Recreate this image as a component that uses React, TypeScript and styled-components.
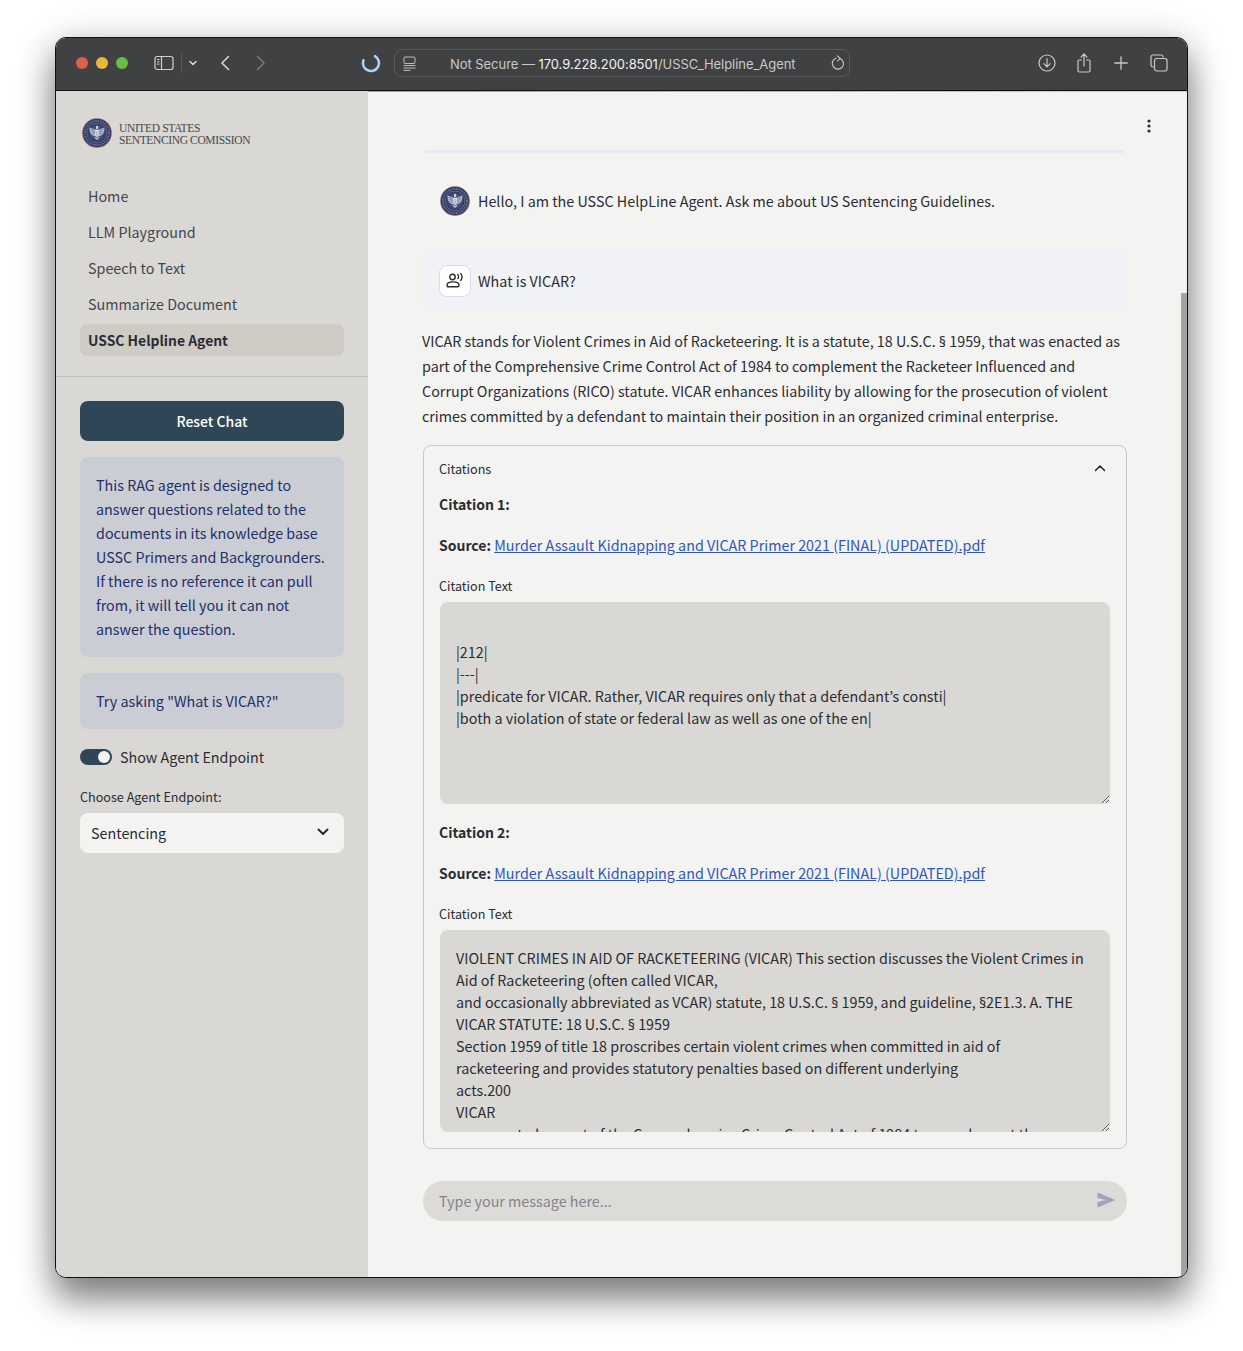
import { useId } from 'react';
import styled, { createGlobalStyle } from 'styled-components';

const SANS = '"Noto Sans CJK JP", "Noto Sans", sans-serif';
const INK = '#2b2c33';

const GlobalStyle = createGlobalStyle`
  html, body {
    margin: 0;
    padding: 0;
    height: 100%;
    background: #ffffff;
    overflow: hidden;
  }
  * {
    box-sizing: border-box;
  }
`;

const SOURCE_FILE = 'Murder Assault Kidnapping and VICAR Primer 2021 (FINAL) (UPDATED).pdf';

const Seal = ({ size }: { size: number }) => {
  const id = useId();
  return (
    <svg width={size} height={size} viewBox="0 0 30 30" style={{ flexShrink: 0 }}>
      <defs>
        <radialGradient id={id} cx="50%" cy="50%" r="50%">
          <stop offset="0%" stopColor="#66708f" />
          <stop offset="100%" stopColor="#2d3964" />
        </radialGradient>
      </defs>
      <circle cx="15" cy="15" r="14.8" fill="#8a5a66" />
      <circle cx="15" cy="15" r="13.9" fill="#2b3863" />
      <circle cx="15" cy="15" r="12.1" fill="none" stroke="#a4acc4" strokeWidth="1.7" strokeDasharray="0.8 0.9" opacity="0.7" />
      <circle cx="15" cy="15" r="10" fill={`url(#${id})`} stroke="#8f98b3" strokeWidth="0.5" />
      <path d="M15 7.8c.9 0 1.5.7 1.4 1.5l-.6.6.1 1.4h-1.8l.1-1.5c-.6-.8 0-2 .8-2z" fill="#d6dae4" />
      <path d="M13.6 11.8 7.6 9.6c-.3 3.6.6 7 4.2 8.4l1.8.2zM16.4 11.8l6-2.2c.3 3.6-.6 7-4.2 8.4l-1.8.2z" fill="#aeb5ca" />
      <path d="M9.2 11.2 13 13M9.4 13.2 13 14.6M10.4 15.4 13 16.2M20.8 11.2 17 13M20.6 13.2 17 14.6M19.6 15.4 17 16.2" stroke="#4f5b80" strokeWidth="0.5" />
      <path d="M12.9 12h4.2v4.6c0 1.2-1 2-2.1 2.6-1.1-.6-2.1-1.4-2.1-2.6z" fill="#e4e7ee" />
      <path d="M14 13v4.8M15 13v5.4M16 13v4.8" stroke="#6b7696" strokeWidth="0.4" />
      <path d="M12.3 19.6l2.7 2.4 2.7-2.4-1.3-.6-1.4 1.1-1.4-1.1z" fill="#b9c0d2" />
    </svg>
  );
};

const Page = styled.div`
  padding: 37px 55px 0;
`;

const Window = styled.div`
  width: 1133px;
  height: 1241px;
  border: 1px solid #111112;
  border-radius: 11px;
  overflow: hidden;
  display: flex;
  flex-direction: column;
  background: #f3f3f1;
  box-shadow: 0 22px 34px rgba(0, 0, 0, 0.42), 0 6px 40px rgba(0, 0, 0, 0.22);
`;

const TitleBar = styled.header`
  height: 53px;
  flex-shrink: 0;
  background: #404143;
  border-bottom: 1px solid #111112;
  display: flex;
  align-items: center;
  padding: 0 19px 2px 20px;
  position: relative;
`;

const Progress = styled.div`
  position: absolute;
  left: 0;
  right: 0;
  bottom: -2px;
  height: 1px;
  background: linear-gradient(90deg, #d9734e, #dfa25b 50%, #e6d772);
`;

const Light = styled.span<{ $color: string; $after?: number }>`
  width: 12px;
  height: 12px;
  border-radius: 50%;
  background: ${({ $color }) => $color};
  margin-right: ${({ $after }) => $after ?? 8}px;
`;

const BarIcon = styled.svg<{ $after?: number }>`
  flex-shrink: 0;
  display: block;
  margin-right: ${({ $after }) => $after ?? 0}px;
`;

const Divider = styled.span`
  width: 1px;
  height: 20px;
  background: #57585a;
  margin: 0 7px 0 7px;
`;

const AddressBar = styled.div`
  width: 456px;
  height: 28px;
  margin-left: 13px;
  border: 1px solid #58595b;
  border-radius: 8px;
  display: flex;
  align-items: center;
  padding: 0 4px 0 8px;
`;

const Address = styled.div`
  flex: 1;
  padding: 2px 0 0 34px;
  font: 400 13px/16px Inter, "Liberation Sans", sans-serif;
  letter-spacing: -0.05px;
  color: #c9c9ca;
  white-space: nowrap;
`;

const Host = styled.span`
  color: #f1f1f1;
`;

const BarSpacer = styled.div`
  flex: 1;
`;

const Body = styled.div`
  flex: 1;
  display: flex;
  min-height: 0;
  position: relative;
`;

const Sidebar = styled.aside`
  width: 312px;
  flex-shrink: 0;
  background: #d9d8d4;
  display: flex;
  flex-direction: column;
  font-family: ${SANS};
  color: ${INK};
`;

const Logo = styled.div`
  display: flex;
  align-items: center;
  gap: 7px;
  padding: 27px 0 0 26px;
`;

const LogoText = styled.div`
  font: 400 11.5px/12.5px "Liberation Serif", serif;
  letter-spacing: -0.36px;
  padding-top: 2px;
  color: #4a4a4a;
`;

const Nav = styled.nav`
  display: flex;
  flex-direction: column;
  gap: 4px;
  padding: 0 24px;
  margin-top: 32px;
`;

const NavItem = styled.div<{ $active?: boolean }>`
  height: 32px;
  padding: 0 8px;
  border-radius: 8px;
  font-size: ${({ $active }) => ($active ? 13.9 : 14.34)}px;
  line-height: 32px;
  font-weight: ${({ $active }) => ($active ? 600 : 400)};
  background: ${({ $active }) => ($active ? '#cdcbc4' : 'transparent')};
  color: ${({ $active }) => ($active ? INK : '#45464d')};
`;

const SideRule = styled.hr`
  border: 0;
  height: 1px;
  background: #c2c1bd;
  margin: 20px 0 0;
`;

const SideBlock = styled.div`
  padding: 24px 24px 0;
  display: flex;
  flex-direction: column;
`;

const ResetButton = styled.button`
  height: 40px;
  border: 0;
  border-radius: 8px;
  background: #2f4656;
  color: #ffffff;
  font-family: ${SANS};
  font-size: 14px;
  font-weight: 500;
`;

const InfoBox = styled.div`
  margin-top: 16px;
  padding: 16px;
  border-radius: 8px;
  background: #cbcdd5;
  color: #1e2f69;
  font-size: 14.34px;
  line-height: 24px;
`;

const ToggleRow = styled.div`
  display: flex;
  align-items: center;
  gap: 8px;
  margin-top: 16px;
  font-size: 14.34px;
  line-height: 24px;
`;

const Toggle = styled.span`
  width: 32px;
  height: 16px;
  border-radius: 8px;
  background: #2f4656;
  display: flex;
  justify-content: flex-end;
  align-items: center;
  padding-right: 2px;
`;

const Knob = styled.span`
  width: 12px;
  height: 12px;
  border-radius: 50%;
  background: #f3f3f1;
`;

const FieldLabel = styled.div<{ $top: number }>`
  margin-top: ${({ $top }) => $top}px;
  font-size: 12.6px;
  line-height: 20px;
  color: ${INK};
`;

const Select = styled.div`
  height: 40px;
  margin-top: 6px;
  padding: 0 15px 2px 11px;
  border-radius: 8px;
  background: #f3f3f1;
  display: flex;
  align-items: center;
  justify-content: space-between;
  font-size: 14.34px;
`;

const Main = styled.main`
  flex: 1;
  min-width: 0;
  padding: 59px 60px 0 55px;
  font-family: ${SANS};
  font-size: 14.34px;
  color: ${INK};
  position: relative;
`;

const MenuDots = styled.svg`
  position: absolute;
  top: 28px;
  right: 36px;
`;

const Scrollbar = styled.div`
  position: absolute;
  top: 202px;
  bottom: 0;
  right: 0;
  width: 6px;
  background: #a4a39f;
`;

const TopRule = styled.div`
  height: 3px;
  margin: 0 2px;
  background: #e5e9f1;
  border-radius: 0 0 3px 3px;
`;

const HelloRow = styled.div`
  display: flex;
  align-items: center;
  gap: 8px;
  height: 30px;
  margin-top: 33px;
  padding-left: 17px;
  line-height: 24px;
`;

const UserRow = styled.div`
  display: flex;
  align-items: center;
  gap: 7px;
  height: 61px;
  margin-top: 34px;
  padding-left: 16px;
  border-radius: 8px;
  background: #f0f2f6;
`;

const UserBadge = styled.span`
  width: 32px;
  height: 32px;
  border: 1px solid #dadce5;
  border-radius: 8px;
  background: #ffffff;
  display: flex;
  align-items: center;
  justify-content: center;
`;

const Answer = styled.p`
  margin: 17px -1px 0 -1px;
  line-height: 25px;
`;

// the CJK font sets § far too wide, so it comes from the Latin family
const Section = styled.span`
  font-family: "Noto Sans", sans-serif;
  font-size: 14px;
  line-height: 0;
`;

const Expander = styled.section`
  margin-top: 17px;
  height: 704px;
  border: 1px solid #c9c8c6;
  border-radius: 8px;
  padding: 0 16px 0 15px;
`;

const ExpanderHead = styled.div`
  height: 46px;
  display: flex;
  align-items: center;
  justify-content: space-between;
  padding: 0 4px 2px 0;
  font-size: 12.6px;
`;

const Heading = styled.div<{ $top: number }>`
  margin-top: ${({ $top }) => $top}px;
  line-height: 24px;
`;

const Strong = styled.strong`
  font-weight: 600;
  font-size: 14px;
`;

const SourceLink = styled.a`
  color: #2f55c5;
  text-decoration: underline;
`;

const CitationText = styled.div`
  width: 670px;
  height: 202px;
  margin-top: 6px;
  margin-left: 1px;
  padding: 17px 16px 0 16px;
  border-radius: 8px;
  background: #d9d8d4;
  line-height: 22px;
  resize: vertical;
  overflow: hidden;
`;

const ChatInput = styled.div`
  height: 40px;
  margin-top: 32px;
  padding: 0 11px 2px 16px;
  border-radius: 20px;
  background: #dcdbd8;
  display: flex;
  align-items: center;
  justify-content: space-between;
  color: #83848b;
`;

const App = () => {
  return (
    <>
      <GlobalStyle />
      <Page>
        <Window>
          <TitleBar>
            <Light $color="#dc604b" />
            <Light $color="#e8b93a" />
            <Light $color="#69bd45" $after={26} />
            <BarIcon width="20" height="16" viewBox="0 0 20 16" fill="none" stroke="#cfcfd0" strokeWidth="1.2">
              <rect x="1" y="1.5" width="18" height="13" rx="2.2" />
              <path d="M7.5 1.5v13" />
              <path d="M3 4.5h2.5M3 6.8h2.5M3 9.1h2.5" strokeWidth="1" />
            </BarIcon>
            <Divider />
            <BarIcon width="8" height="6" viewBox="0 0 8 6" fill="none" stroke="#d8d8d9" strokeWidth="1.5" strokeLinecap="round" strokeLinejoin="round" $after={23}>
              <path d="M1 1.5 4 4.5 7 1.5" />
            </BarIcon>
            <BarIcon width="10" height="16" viewBox="0 0 10 16" fill="none" stroke="#d8d8d9" strokeWidth="1.5" strokeLinecap="round" strokeLinejoin="round" $after={26}>
              <path d="M8.5 1.5 2 8l6.5 6.5" />
            </BarIcon>
            <BarIcon width="10" height="16" viewBox="0 0 10 16" fill="none" stroke="#77787a" strokeWidth="1.5" strokeLinecap="round" strokeLinejoin="round" $after={95}>
              <path d="M1.5 1.5 8 8l-6.5 6.5" />
            </BarIcon>
            <BarIcon width="20" height="20" viewBox="0 0 20 20" fill="none" strokeWidth="2.6" strokeLinecap="round">
              <circle cx="10" cy="10" r="8" stroke="#a9d3f7" strokeDasharray="36 14" transform="rotate(-60 10 10)" />
            </BarIcon>
            <AddressBar>
              <BarIcon width="13" height="15" viewBox="0 0 13 15" fill="none" stroke="#bdbdbe" strokeWidth="1">
                <rect x="1" y="1" width="11" height="6.5" rx="1" />
                <path d="M.5 9.5h12M.5 12h12M.5 14.4h7" />
              </BarIcon>
              <Address>
                Not Secure — <Host>170.9.228.200:8501</Host>/USSC_Helpline_Agent
              </Address>
              <BarIcon width="14" height="16" viewBox="0 0 14 16" fill="none" stroke="#c9c9ca" strokeWidth="1.1" strokeLinecap="round" strokeLinejoin="round">
                <path d="M9.2 3.4A5.6 5.6 0 1 1 5 3.2" />
                <path d="M6.4 0.8 9.2 3.4 6.6 5.8" />
              </BarIcon>
            </AddressBar>
            <BarSpacer />
            <BarIcon width="18" height="18" viewBox="0 0 18 18" fill="none" stroke="#c9c9ca" strokeWidth="1.2" strokeLinecap="round" strokeLinejoin="round" $after={21}>
              <circle cx="9" cy="9" r="8" />
              <path d="M9 4.6v8M5.8 9.6 9 12.8l3.2-3.2" />
            </BarIcon>
            <BarIcon width="14" height="20" viewBox="0 0 14 20" fill="none" stroke="#c9c9ca" strokeWidth="1.2" strokeLinecap="round" strokeLinejoin="round" $after={23}>
              <path d="M4.4 7H2.2A1.2 1.2 0 0 0 1 8.2v9.6A1.2 1.2 0 0 0 2.2 19h9.6a1.2 1.2 0 0 0 1.2-1.2V8.2A1.2 1.2 0 0 0 11.8 7H9.6" />
              <path d="M7 13V1.2M4 4.2 7 1l3 3.2" />
            </BarIcon>
            <BarIcon width="14" height="14" viewBox="0 0 14 14" fill="none" stroke="#c9c9ca" strokeWidth="1.3" strokeLinecap="round" $after={22}>
              <path d="M7 .8v12.4M.8 7h12.4" />
            </BarIcon>
            <BarIcon width="18" height="18" viewBox="0 0 18 18" fill="none" stroke="#c9c9ca" strokeWidth="1.2">
              <path d="M3.6 13H3a2 2 0 0 1-2-2V3a2 2 0 0 1 2-2h8a2 2 0 0 1 2 2v.6" />
              <rect x="4.5" y="4.5" width="12.5" height="12.5" rx="2.2" />
            </BarIcon>
            <Progress />
          </TitleBar>
          <Body>
            <Sidebar>
              <Logo>
                <Seal size={30} />
                <LogoText>
                  UNITED STATES
                  <br />
                  SENTENCING COMISSION
                </LogoText>
              </Logo>
              <Nav>
                <NavItem>Home</NavItem>
                <NavItem>LLM Playground</NavItem>
                <NavItem>Speech to Text</NavItem>
                <NavItem>Summarize Document</NavItem>
                <NavItem $active>USSC Helpline Agent</NavItem>
              </Nav>
              <SideRule />
              <SideBlock>
                <ResetButton>Reset Chat</ResetButton>
                <InfoBox>
                  This RAG agent is designed to answer questions related to the documents in its knowledge base USSC
                  Primers and Backgrounders. If there is no reference it can pull from, it will tell you it can not
                  answer the question.
                </InfoBox>
                <InfoBox>Try asking "What is VICAR?"</InfoBox>
                <ToggleRow>
                  <Toggle>
                    <Knob />
                  </Toggle>
                  Show Agent Endpoint
                </ToggleRow>
                <FieldLabel $top={18}>Choose Agent Endpoint:</FieldLabel>
                <Select>
                  Sentencing
                  <svg width="12" height="8" viewBox="0 0 12 8" fill="none" stroke={INK} strokeWidth="2" strokeLinecap="round" strokeLinejoin="round">
                    <path d="M1.5 1.5 6 6l4.5-4.5" />
                  </svg>
                </Select>
              </SideBlock>
            </Sidebar>
            <Main>
              <MenuDots width="4" height="14" viewBox="0 0 4 14" fill={INK}>
                <circle cx="2" cy="2" r="1.6" />
                <circle cx="2" cy="7" r="1.6" />
                <circle cx="2" cy="12" r="1.6" />
              </MenuDots>
              <TopRule />
              <HelloRow>
                <Seal size={30} />
                Hello, I am the USSC HelpLine Agent. Ask me about US Sentencing Guidelines.
              </HelloRow>
              <UserRow>
                <UserBadge>
                  <svg width="18" height="15" viewBox="0 0 18 15" fill="none" stroke={INK} strokeWidth="1.4" strokeLinecap="round">
                    <circle cx="6.5" cy="4" r="2.7" />
                    <path d="M1 12.4c0-2.2 2.4-3.5 6-3.5s6 1.3 6 3.5c0 .9-.5 1.4-1.3 1.4H2.3C1.5 13.8 1 13.3 1 12.4z" />
                    <path d="M11.8 1.6c.9 1 .9 3 0 4M14.8.6c1.6 1.8 1.6 5 0 6.8" />
                  </svg>
                </UserBadge>
                What is VICAR?
              </UserRow>
              <Answer>
                VICAR stands for Violent Crimes in Aid of Racketeering. It is a statute, 18 U.S.C. <Section>§</Section> 1959, that was enacted as
                <br />
                part of the Comprehensive Crime Control Act of 1984 to complement the Racketeer Influenced and
                Corrupt Organizations (RICO) statute. VICAR enhances liability by allowing for the prosecution of
                violent crimes committed by a defendant to maintain their position in an organized criminal enterprise.
              </Answer>
              <Expander>
                <ExpanderHead>
                  Citations
                  <svg width="12" height="8" viewBox="0 0 12 8" fill="none" stroke={INK} strokeWidth="1.6" strokeLinecap="round" strokeLinejoin="round">
                    <path d="M1.5 6.5 6 2l4.5 4.5" />
                  </svg>
                </ExpanderHead>
                <Heading $top={0}>
                  <Strong>Citation 1:</Strong>
                </Heading>
                <Heading $top={17}>
                  <Strong>Source:</Strong> <SourceLink href="#">{SOURCE_FILE}</SourceLink>
                </Heading>
                <FieldLabel $top={19}>Citation Text</FieldLabel>
                <CitationText>
                  <br />
                  |212|
                  <br />
                  |---|
                  <br />
                  |predicate for VICAR. Rather, VICAR requires only that a defendant’s consti|
                  <br />
                  |both a violation of state or federal law as well as one of the en|
                </CitationText>
                <Heading $top={16}>
                  <Strong>Citation 2:</Strong>
                </Heading>
                <Heading $top={17}>
                  <Strong>Source:</Strong> <SourceLink href="#">{SOURCE_FILE}</SourceLink>
                </Heading>
                <FieldLabel $top={19}>Citation Text</FieldLabel>
                <CitationText>
                  VIOLENT CRIMES IN AID OF RACKETEERING (VICAR) This section discusses the Violent Crimes in Aid of
                  Racketeering (often called VICAR,
                  <br />
                  and occasionally abbreviated as VCAR) statute, 18 U.S.C. <Section>§</Section> 1959, and guideline, <Section>§</Section>2E1.3. A. THE
                  <br />
                  VICAR STATUTE: 18 U.S.C. <Section>§</Section> 1959
                  <br />
                  Section 1959 of title 18 proscribes certain violent crimes when committed in aid of
                  <br />
                  racketeering and provides statutory penalties based on different underlying
                  <br />
                  acts.200
                  <br />
                  VICAR
                  <br />
                  was enacted as part of the Comprehensive Crime Control Act of 1984 to complement the
                  <br />
                  Racketeer Influenced and Corrupt Organizations (RICO) statute.
                </CitationText>
              </Expander>
              <ChatInput>
                Type your message here...
                <svg width="19" height="16" viewBox="0 0 19 16" fill="#a3a4b8">
                  <path d="M0.5 0.5 18.5 8 0.5 15.5 0.5 10 9 8 0.5 6z" />
                </svg>
              </ChatInput>
              <Scrollbar />
            </Main>
          </Body>
        </Window>
      </Page>
    </>
  );
};

export default App;
